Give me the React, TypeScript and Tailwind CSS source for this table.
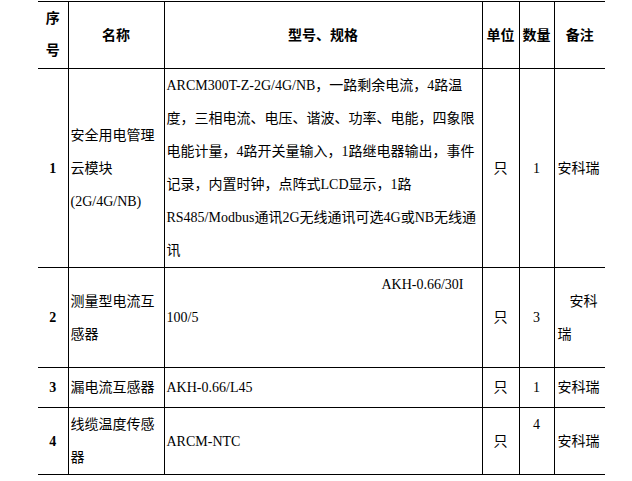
const font = { fontFamily: '"Liberation Serif", "Noto Sans CJK SC", serif' }

type Row = {
  no: string
  name: string[]
  spec: React.ReactNode
  unit: string
  qty: React.ReactNode
  note: React.ReactNode
  h: string
}

const rows: Row[] = [
  {
    no: '1',
    name: ['安全用电管理', '云模块', '(2G/4G/NB)'],
    spec: (
      <>
        <div>ARCM300T-Z-2G/4G/NB，一路剩余电流，4路温</div>
        <div>度，三相电流、电压、谐波、功率、电能，四象限</div>
        <div>电能计量，4路开关量输入，1路继电器输出，事件</div>
        <div>记录，内置时钟，点阵式LCD显示，1路</div>
        <div>RS485/Modbus通讯2G无线通讯可选4G或NB无线通</div>
        <div>讯</div>
      </>
    ),
    unit: '只',
    qty: '1',
    note: '安科瑞',
    h: 'h-[197px]',
  },
  {
    no: '2',
    name: ['测量型电流互', '感器'],
    spec: (
      <>
        <div className="text-right pr-[18px]">AKH-0.66/30I</div>
        <div>100/5</div>
        <div>&nbsp;</div>
      </>
    ),
    unit: '只',
    qty: '3',
    note: (
      <div className="text-left">
        <div className="pl-[12px]">安科</div>
        <div>瑞</div>
      </div>
    ),
    h: 'h-[100px]',
  },
  {
    no: '3',
    name: ['漏电流互感器'],
    spec: <div>AKH-0.66/L45</div>,
    unit: '只',
    qty: '1',
    note: '安科瑞',
    h: 'h-[40px]',
  },
  {
    no: '4',
    name: ['线缆温度传感', '器'],
    spec: <div>ARCM-NTC</div>,
    unit: '只',
    qty: (
      <>
        <div>4</div>
        <div>&nbsp;</div>
      </>
    ),
    note: '安科瑞',
    h: 'h-[67px]',
  },
]

export default function App() {
  return (
    <div className="w-[632px] h-[481px] bg-white pl-[38px] pt-[1px] text-black" style={font}>
      <table className="table-fixed border-collapse w-[567px] text-[14px] leading-[33px]">
        <colgroup>
          <col className="w-[30px]" />
          <col className="w-[96px]" />
          <col className="w-[318px]" />
          <col className="w-[37px]" />
          <col className="w-[35px]" />
          <col className="w-[51px]" />
        </colgroup>
        <thead>
          <tr className="h-[67px] font-bold">
            <th className="border-t border-b border-r border-black p-0 text-center leading-[32px]">
              <div>序</div>
              <div>号</div>
            </th>
            <th className="border-t border-b border-r border-black p-0 text-center">名称</th>
            <th className="border-t border-b border-r border-black p-0 text-center">型号、规格</th>
            <th className="border-t border-b border-r border-black p-0 text-center">单位</th>
            <th className="border-t border-b border-r border-black p-0 text-center">数量</th>
            <th className="border-t border-b border-black p-0 text-center">备注</th>
          </tr>
        </thead>
        <tbody>
          {rows.map(r => (
            <tr key={r.no} className={r.h}>
              <td className="border-b border-r border-black p-0 text-center align-middle font-bold">{r.no}</td>
              <td className="border-b border-r border-black py-0 pl-[2px] pr-0 align-middle whitespace-nowrap">
                {r.name.map(n => (
                  <div key={n}>{n}</div>
                ))}
              </td>
              <td className="border-b border-r border-black py-0 pl-[2px] pr-0 align-middle whitespace-nowrap">{r.spec}</td>
              <td className="border-b border-r border-black p-0 text-center align-middle">{r.unit}</td>
              <td className="border-b border-r border-black p-0 text-center align-middle">{r.qty}</td>
              <td className="border-b border-black py-0 pl-[3px] pr-0 align-middle whitespace-nowrap">{r.note}</td>
            </tr>
          ))}
        </tbody>
      </table>
    </div>
  )
}
